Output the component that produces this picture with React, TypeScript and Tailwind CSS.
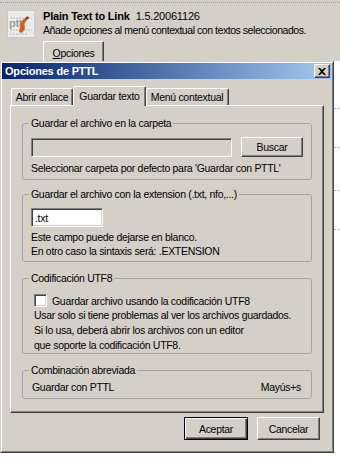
import React from "react";

const raised =
  "border border-t-white border-l-white border-r-[#404040] border-b-[#404040] shadow-[inset_-1px_-1px_0_#808080]";
const sunken =
  "border border-t-[#808080] border-l-[#808080] border-r-white border-b-white shadow-[inset_1px_1px_0_#404040,inset_-1px_-1px_0_#d4d0c8]";

function AddonIcon() {
  return (
    <svg width="28" height="28" viewBox="0 0 28 28">
      <rect x="0.5" y="0.5" width="27" height="27" fill="#ececec" stroke="#c8c8c8" />
      <path d="M3 8h22M3 20h22M3 24h18" stroke="#b8b8b8" strokeWidth="1" strokeDasharray="2 1" />
      <text x="2" y="17" fontSize="11" fontWeight="bold" fill="#9a9a9a" fontFamily="Liberation Sans, sans-serif">
        pttl
      </text>
      <path d="M12 22 L14 12 L18 8 L20 10 L17 14 L18 19 L15 23 Z" fill="#d2601c" />
      <path d="M18 8 L21 6 L22 8 L20 10 Z" fill="#8a3a10" />
    </svg>
  );
}

function Group({
  title,
  className = "",
  children,
}: {
  title: string;
  className?: string;
  children: React.ReactNode;
}) {
  return (
    <fieldset className={`border border-[#a3a3a3] rounded-[3px] ${className}`}>
      <legend className="ml-[6px] px-[2px] leading-[13px]">{title}</legend>
      {children}
    </fieldset>
  );
}

export default function App() {
  return (
    <div className="w-[340px] h-[459px] bg-white overflow-hidden text-black text-[10.5px] tracking-[-0.3px] leading-[14px] font-['Liberation_Sans',Arial,sans-serif]">
      {/* add-on list entry behind the dialog */}
      <div className="h-[61px] bg-[#d4d0c8] pt-[2px] overflow-hidden">
        <div className="border-t border-dotted border-[#9c9c9c]" />
        <div className="flex">
          <div className="ml-[7px] mt-[7px]">
            <AddonIcon />
          </div>
          <div className="ml-[8px] pt-[6px]">
            <div className="flex text-[11px] tracking-[-0.2px]">
              <span className="font-bold">Plain Text to Link</span>
              <span className="ml-[6px]">1.5.20061126</span>
            </div>
            <div className="tracking-[-0.45px]">Añade opciones al menú contextual con textos seleccionados.</div>
            <button className={`mt-[4px] w-[61px] h-[23px] bg-[#d4d0c8] ${raised}`}>
              <span className="underline">O</span>pciones
            </button>
          </div>
        </div>
      </div>

      <div className="flex">
        {/* dialog */}
        <div className="w-[334px] h-[392px] bg-[#d4d0c8] border border-t-[#d4d0c8] border-l-[#d4d0c8] border-r-[#404040] border-b-[#404040]">
          <div className="h-full border border-t-white border-l-white border-r-[#808080] border-b-[#808080] flex flex-col">
            <div className="h-[16px] flex items-center justify-between pl-[3px] pr-[2px] bg-gradient-to-r from-[#0a246a] to-[#a6caf0]">
              <span className="text-white font-bold text-[11px] tracking-[-0.2px]">Opciones de PTTL</span>
              <button className={`w-[16px] h-[14px] bg-[#d4d0c8] flex items-center justify-center ${raised}`}>
                <svg width="8" height="7" viewBox="0 0 8 7">
                  <path d="M0 0h2l2 2 2-2h2L5 3.5 8 7H6L4 5 2 7H0l3-3.5z" fill="#000" />
                </svg>
              </button>
            </div>

            {/* tabs */}
            <div className="mt-[7px] ml-[9px] h-[19px] flex items-end relative z-10">
              <div className="w-[62px] h-[17px] flex items-center justify-center rounded-t-[2px] border-t border-l border-r border-t-white border-l-white border-r-[#404040] shadow-[inset_-1px_0_0_#808080]">
                Abrir enlace
              </div>
              <div className="w-[73px] h-[20px] -mb-[1px] pb-[2px] flex items-center justify-center bg-[#d4d0c8] rounded-t-[2px] border-t border-l border-r border-t-white border-l-white border-r-[#404040] shadow-[inset_-1px_0_0_#808080]">
                Guardar texto
              </div>
              <div className="w-[83px] h-[17px] flex items-center justify-center rounded-t-[2px] border-t border-r border-t-white border-r-[#404040] shadow-[inset_-1px_0_0_#808080,inset_1px_0_0_#fff]">
                Menú contextual
              </div>
            </div>

            {/* panel */}
            <div className="mx-[8px] h-[308px] border border-t-white border-l-white border-r-[#404040] border-b-[#404040] shadow-[inset_-1px_-1px_0_#808080] px-[11px] pt-[11px]">
              <Group title="Guardar el archivo en la carpeta" className="pb-[4px]">
                <div className="mt-[7px] px-[8px] flex items-center gap-[9px]">
                  <div className={`flex-1 h-[19px] bg-[#d4d0c8] ${sunken}`} />
                  <button className={`w-[62px] h-[20px] bg-[#d4d0c8] ${raised}`}>Buscar</button>
                </div>
                <div className="mt-[4px] px-[8px]">
                  Seleccionar carpeta por defecto para 'Guardar con PTTL'
                </div>
              </Group>

              <Group title="Guardar el archivo con la extension (.txt, nfo,...)" className="mt-[8px] pb-[3px]">
                <div className="mt-[7px] px-[8px]">
                  <div className={`w-[72px] h-[19px] bg-white pl-[3px] flex items-center ${sunken}`}>.txt</div>
                </div>
                <div className="mt-[3px] px-[8px]">
                  <div>Este campo puede dejarse en blanco.</div>
                  <div>En otro caso la sintaxis será: .EXTENSION</div>
                </div>
              </Group>

              <Group title="Codificación UTF8" className="mt-[10px]">
                <div className="mt-[9px] pl-[11px] flex items-center gap-[5px] h-[13px]">
                  <div className={`w-[13px] h-[13px] bg-white ${sunken}`} />
                  <span>Guardar archivo usando la codificación UTF8</span>
                </div>
                <div className="mt-[1px] pl-[11px] leading-[15px]">
                  <div>Usar solo si tiene problemas al ver los archivos guardados.</div>
                  <div>Si lo usa, deberá abrir los archivos con un editor</div>
                  <div>que soporte la codificación UTF8.</div>
                </div>
              </Group>

              <Group title="Combinación abreviada" className="mt-[10px] pb-[4px]">
                <div className="mt-[3px] pl-[9px] pr-[10px] flex justify-between">
                  <span>Guardar con PTTL</span>
                  <span>Mayús+s</span>
                </div>
              </Group>
            </div>

            {/* buttons */}
            <div className="mt-[4px] pr-[12px] flex justify-end gap-[9px]">
              <button className="w-[64px] h-[23px] bg-[#d4d0c8] border border-black shadow-[inset_1px_1px_0_#fff,inset_-1px_-1px_0_#404040,inset_-2px_-2px_0_#808080]">
                Aceptar
              </button>
              <button className={`w-[63px] h-[23px] bg-[#d4d0c8] ${raised}`}>Cancelar</button>
            </div>
          </div>
        </div>

        {/* list behind, right edge */}
        <div className="flex-1 flex flex-col">
          <div className="mt-[47px] border-t border-dotted border-[#b0b0b0]" />
          <div className="mt-[38px] border-t border-dotted border-[#b0b0b0]" />
          <div className="mt-[42px] border-t border-dotted border-[#b0b0b0]" />
          <div className="mt-[38px] border-t border-dotted border-[#b0b0b0]" />
        </div>
      </div>
    </div>
  );
}
